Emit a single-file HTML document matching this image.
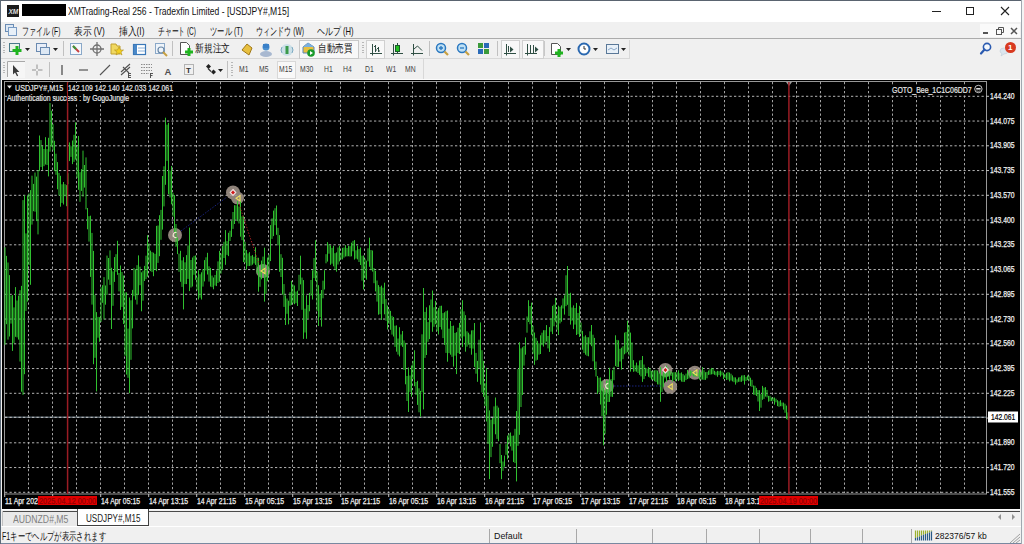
<!DOCTYPE html>
<html><head><meta charset="utf-8">
<style>
*{margin:0;padding:0;box-sizing:border-box}
html,body{width:1024px;height:544px;overflow:hidden;background:#f0f0f0;font-family:"Liberation Sans",sans-serif;color:#000}
.a{position:absolute}
#title{left:0;top:0;width:1024px;height:22px;background:#fff}
#menu{left:0;top:22px;width:1024px;height:16px;background:#f0f0f0}
.mi{position:absolute;top:24.5px;font-size:10.5px;line-height:13px;white-space:nowrap;color:#111}
.fit{transform-origin:0 0}
#tb{left:0;top:38px;width:1024px;height:41px;background:#f0f0f0}
.sep{position:absolute;width:1px;background:#c8c8c8}
.tf{position:absolute;top:64px;font-size:8.5px;line-height:10px;color:#444;white-space:nowrap;transform-origin:0 0;transform:scaleX(0.8)}
#chart{left:2px;top:80px;width:1018px;height:429px;background:#000}
.pl{position:absolute;left:990px;font-size:8.5px;line-height:11px;color:#f0f0f0;-webkit-text-stroke:0.25px #f0f0f0;white-space:nowrap;transform-origin:0 0;transform:scaleX(0.8)}
.tl{position:absolute;top:496px;font-size:8.5px;line-height:10px;color:#f0f0f0;-webkit-text-stroke:0.25px #f0f0f0;white-space:nowrap;transform-origin:0 0;transform:scaleX(0.81)}
.ct{position:absolute;font-size:8.5px;line-height:10px;color:#e8e8e8;-webkit-text-stroke:0.2px currentColor;white-space:nowrap;transform-origin:0 0;transform:scaleX(0.82)}
#status{left:0;top:527px;width:1024px;height:17px;background:#f0f0f0}
.ss{position:absolute;top:529px;width:1px;height:14px;background:#a8a8a8}
</style></head><body>
<!-- window border -->

<div class="a" id="title"></div>
<div class="a" style="left:0;top:0;width:1024px;height:1px;background:#5a6470"></div>
<div class="a" style="left:7px;top:5px;width:12px;height:12px;background:#1a1a1a"></div>
<div class="a" style="left:8.5px;top:7.5px;font-size:6.5px;line-height:7px;color:#e0e0e0;font-weight:bold;font-style:italic">XM</div>
<div class="a" style="left:22px;top:4px;width:44px;height:12px;background:#000"></div>
<div class="a fit" style="left:67.5px;top:4px;font-size:10.5px;line-height:14px;color:#111;white-space:nowrap;--w:221.5;transform:scaleX(0.814338)">XMTrading-Real 256 - Tradexfin Limited - [USDJPY#,M15]</div>
<!-- window controls -->
<div class="a" style="left:932px;top:11px;width:9px;height:1px;background:#222"></div>
<div class="a" style="left:966px;top:7px;width:8px;height:8px;border:1px solid #222"></div>
<svg class="a" style="left:1000px;top:6px" width="10" height="10"><path d="M1 1L9 9M9 1L1 9" stroke="#222" stroke-width="1.1"/></svg>

<!-- menu -->
<div class="a" id="menu"></div>
<svg class="a" style="left:5px;top:24px" width="12" height="12"><rect x="0.5" y="0.5" width="8" height="7" fill="#dde8f4" stroke="#6a8cb4"/><rect x="3.5" y="3.5" width="8" height="8" fill="#e8f0f8" stroke="#7a9cc4"/></svg>
<div class="mi fit" style="left:21.6px;--w:38.2;transform:scaleX(0.636667)">ファイル (F)</div>
<div class="mi fit" style="left:73.7px;--w:30.9;transform:scaleX(0.792308)">表示 (V)</div>
<div class="mi fit" style="left:118.9px;--w:25.5;transform:scaleX(0.796875)">挿入(I)</div>
<div class="mi fit" style="left:157.7px;--w:38.2;transform:scaleX(0.616129)">チャート (C)</div>
<div class="mi fit" style="left:209.8px;--w:32.6;transform:scaleX(0.665306)">ツール (T)</div>
<div class="mi fit" style="left:255.6px;--w:48.2;transform:scaleX(0.642667)">ウィンドウ (W)</div>
<div class="mi fit" style="left:317px;--w:37;transform:scaleX(0.72549)">ヘルプ (H)</div>
<div class="a" style="left:980px;top:24px;width:40px;height:13px;background:#fafafa"></div>
<div class="a" style="left:983px;top:32px;width:5px;height:2px;background:#555"></div>
<svg class="a" style="left:996px;top:27px" width="9" height="8"><rect x="0.5" y="2.5" width="5" height="5" fill="none" stroke="#555"/><path d="M2.5 2.5V0.5H7.5V5.5H5.5" fill="none" stroke="#555"/></svg>
<svg class="a" style="left:1010px;top:27px" width="8" height="8"><path d="M1 1L7 7M7 1L1 7" stroke="#555" stroke-width="1.5"/></svg>

<!-- toolbars -->
<div class="a" id="tb"></div>
<div class="a" style="left:2px;top:79px;width:1018px;height:1px;background:#fcfcfc"></div>
<div class="a" style="left:0;top:38px;width:1022px;height:1px;background:#ababab"></div>
<div class="a" style="left:0;top:58px;width:630px;height:1px;background:#d8d8d8"></div>
<!-- grippers -->
<div class="a" style="left:3px;top:42px;width:2px;height:13px;background:repeating-linear-gradient(#b8b8b8 0 1px,transparent 1px 2.5px)"></div>
<div class="a" style="left:3px;top:62px;width:2px;height:13px;background:repeating-linear-gradient(#b8b8b8 0 1px,transparent 1px 2.5px)"></div>
<div class="a" style="left:231px;top:62px;width:2px;height:14px;background:repeating-linear-gradient(#b8b8b8 0 1px,transparent 1px 2.5px)"></div>
<div class="a" style="left:362px;top:42px;width:2px;height:13px;background:repeating-linear-gradient(#b8b8b8 0 1px,transparent 1px 2.5px)"></div>

<!-- row1 icons -->
<svg class="a" style="left:0;top:38px" width="640" height="21">
 <!-- new chart -->
 <rect x="9.5" y="5.5" width="10" height="8" fill="#e8f2e8" stroke="#4a7a8a"/>
 <path d="M17 8v9M12.5 12.5h9" stroke="#1fb41f" stroke-width="3"/>
 <path d="M25 10h5l-2.5 3z" fill="#222"/>
 <rect x="36.5" y="5.5" width="10" height="8" fill="#e8eef8" stroke="#6a8ab0"/>
 <rect x="40.5" y="9.5" width="9" height="7" fill="#dde8f4" stroke="#6a8ab0"/>
 <path d="M53 10h5l-2.5 3z" fill="#222"/>
 <rect x="63" y="3" width="1" height="15" fill="#c0c0c0"/>
 <rect x="70.5" y="5.5" width="11" height="11" fill="#f4f8fc" stroke="#8aa8c8"/>
 <path d="M73 8l6 6" stroke="#c84040" stroke-width="2"/><path d="M73 8l3 3" stroke="#3a9a3a" stroke-width="2"/>
 <circle cx="97" cy="11" r="4" fill="none" stroke="#707070" stroke-width="1.3"/><path d="M97 4v14M90 11h14" stroke="#707070" stroke-width="1.3"/>
 <path d="M111 6h5l1 2h3v8h-9z" fill="#f0d860" stroke="#c0a030"/><path d="M119 9l1.5 3h3l-2.5 2 1 3-3-2-3 2 1-3-2.5-2h3z" fill="#f4d020" stroke="#b09020" stroke-width="0.6"/>
 <rect x="133.5" y="6.5" width="12" height="10" fill="#fff" stroke="#3a78b8" stroke-width="1.2"/><rect x="134" y="7" width="3" height="9" fill="#4a88c8"/><path d="M138 10h7M138 13h7" stroke="#8ab0d8"/>
 <rect x="155.5" y="5.5" width="9" height="10" fill="#eef4fa" stroke="#8aa8c8"/><circle cx="161" cy="12" r="3" fill="none" stroke="#6a88a8" stroke-width="1.2"/><path d="M163 14l4 4" stroke="#c8a040" stroke-width="2"/>
 <rect x="172" y="3" width="1" height="15" fill="#c0c0c0"/>
 <path d="M180.5 4.5h6l3 3v9h-9z" fill="#fff" stroke="#555"/>
 <path d="M189 10v8M185 14h8" stroke="#1fb41f" stroke-width="3"/>
 <path d="M242 12l5-6 5 4-3 7z" fill="#e8c040" stroke="#a07818"/>
 <circle cx="266" cy="9" r="3.5" fill="#4a90d0"/><ellipse cx="266" cy="16" rx="6" ry="3" fill="#a8b8d0"/><rect x="263" y="6" width="6" height="4" fill="#3a80c8"/>
 <circle cx="287" cy="12" r="6" fill="#cce0e8"/><path d="M287 8v8" stroke="#3a9a4a" stroke-width="3"/><path d="M282 9q-2 3 0 6M292 9q2 3 0 6" stroke="#7aa8c0" fill="none"/>
 <rect x="299.5" y="2.5" width="59" height="18" fill="#f8f8f8" stroke="#c8c8c8"/>
 <path d="M303 9l5-4 6 4v6h-11z" fill="#e8c040" stroke="#5a88b8"/><path d="M303 9l5-4 6 4" fill="#7ab0e0"/>
 <circle cx="311" cy="15" r="3.8" fill="#1a9a2a"/><path d="M310 13v4l3-2z" fill="#fff"/>
 <rect x="366.5" y="2.5" width="18" height="18" fill="#f8f8f8" stroke="#d0d0d0"/>
 <path d="M372.5 6v11.5M370 15.5h12M375.5 7v7M374 8.5h1.5M375.5 12h1.5M378.5 9v5M377 10.5h1.5M378.5 13h1.5" stroke="#2f4f44" stroke-width="1"/>
 <path d="M393.5 6v11.5M391 15.5h12M397.5 5v11" stroke="#2f4f44" stroke-width="1"/><rect x="395.5" y="7.5" width="4" height="6" fill="#22c022" stroke="#1a5a2a" stroke-width="1"/>
 <path d="M413.5 6v11.5M411 15.5h12M414 11l3.5-3 4.5 4.5" stroke="#2f4f44" stroke-width="1" fill="none"/>
 <rect x="429" y="3" width="1" height="15" fill="#c0c0c0"/>
 <circle cx="441" cy="10" r="4.5" fill="#bfe0f4" stroke="#2a78c0" stroke-width="1.5"/><path d="M439 10h4M441 8v4" stroke="#2a78c0" stroke-width="1.3"/><path d="M444.5 13.5l3.5 3.5" stroke="#c8a040" stroke-width="2.2"/>
 <circle cx="462" cy="10" r="4.5" fill="#bfe0f4" stroke="#2a78c0" stroke-width="1.5"/><path d="M460 10h4" stroke="#2a78c0" stroke-width="1.3"/><path d="M465.5 13.5l3.5 3.5" stroke="#c8a040" stroke-width="2.2"/>
 <rect x="478" y="5" width="5" height="5" fill="#3a9a3a"/><rect x="484" y="5" width="5" height="5" fill="#2a6ab8"/><rect x="478" y="11" width="5" height="5" fill="#2a6ab8"/><rect x="484" y="11" width="5" height="5" fill="#3a9a3a"/>
 <rect x="497" y="3" width="1" height="15" fill="#c0c0c0"/>
 <rect x="501.5" y="2.5" width="18" height="18" fill="#f8f8f8" stroke="#d0d0d0"/>
 <path d="M506.5 6v11.5M504 15.5h12M508.5 8v6" stroke="#2f4f44" stroke-width="1"/><path d="M510 8.5l3.5 3-3.5 3z" fill="#2f4f44"/>
 <rect x="522.5" y="2.5" width="21" height="18" fill="#f8f8f8" stroke="#d0d0d0"/>
 <path d="M527.5 6v11.5M525 15.5h12M530.5 7v8M533.5 7v8" stroke="#2f4f44" stroke-width="1"/><path d="M535 8.5l3.5 3-3.5 3z" fill="#2f4f44"/>
 <rect x="544" y="3" width="1" height="15" fill="#c8c8c8"/>
 <path d="M551.5 5.5h6l3 3v8h-9z" fill="#fff" stroke="#555"/><path d="M559 11v8M555 15h8" stroke="#1fb41f" stroke-width="3"/>
 <path d="M566 10h5l-2.5 3z" fill="#222"/>
 <circle cx="584" cy="11" r="5.5" fill="#fff" stroke="#2a68b0" stroke-width="2"/><path d="M584 8v3h2" stroke="#333" fill="none"/>
 <path d="M593 10h5l-2.5 3z" fill="#222"/>
 <rect x="606.5" y="6.5" width="12" height="9" fill="#e8f0f8" stroke="#5a7898"/><path d="M608 12l3-2 3 2 3-2" stroke="#8aa8c8" fill="none"/>
 <path d="M621 10h5l-2.5 3z" fill="#222"/>
 <rect x="629" y="2" width="1" height="18" fill="#d8d8d8"/>
</svg>
<svg class="a" style="left:970px;top:38px" width="54" height="21">
 <circle cx="17" cy="9" r="3.6" fill="#f4f8fc" stroke="#2a5ab0" stroke-width="1.6"/><path d="M14.5 11.5l-3.5 4" stroke="#2a5ab0" stroke-width="2.2" stroke-linecap="round"/>
 <path d="M30 13q0-3 4-3t4 3-4 3l-3 2 1-2.5q-2-.8-2-2.5z" fill="#dce6ee" stroke="#c0ccd8" stroke-width="0.6"/>
 <circle cx="40.5" cy="9.5" r="5.5" fill="#d83a20"/>
</svg>
<div class="a fit" style="left:195px;top:42px;font-size:10.5px;line-height:13px;color:#111;white-space:nowrap;--w:35;transform:scaleX(0.795455)">新規注文</div>
<div class="a fit" style="left:318px;top:42px;font-size:10.5px;line-height:13px;color:#111;white-space:nowrap;--w:34;transform:scaleX(0.772727)">自動売買</div>
<div class="a" style="left:1008px;top:43px;font-size:8px;line-height:10px;color:#fff;font-weight:bold">1</div>

<!-- row2 -->
<svg class="a" style="left:0;top:58px" width="640" height="21">
 <rect x="7" y="3" width="18" height="17" fill="#f6f6f6"/><path d="M7.5 19V3.5H25" stroke="#a8a8a8" stroke-width="1" fill="none"/>
 <path d="M13 7v9.5l2-2 2 3.8 1.2-.6-1.8-3.6h3z" fill="#3a3a3a"/>
 <path d="M37 6.5v4.5M37 13v4.5M32 12h4M38 12h4.5" stroke="#909090" stroke-width="1"/>
 <rect x="49" y="4" width="1" height="15" fill="#c0c0c0"/>
 <path d="M62 7v10" stroke="#444" stroke-width="1.2"/>
 <path d="M79 12h9" stroke="#555" stroke-width="1.2"/>
 <path d="M100 17l10-10" stroke="#555" stroke-width="1.1"/>
 <path d="M121 14l9-8M121 17l9-8M123 9l6 6" stroke="#505050" stroke-width="1.1"/><path d="M128.5 15.5h2.5M128.5 17.5h2.5M128.5 19.5h2.5M128.5 15v5" stroke="#444" stroke-width="0.9"/>
 <path d="M141 6.5h11M141 9.5h11M141 12.5h11M141 15.5h8" stroke="#8a8a8a" stroke-dasharray="1.5 1"/><path d="M150.5 15v5M150.5 15.5h2.5M150.5 17.5h2" stroke="#444" stroke-width="0.9"/>
 <text x="164.5" y="16.5" font-size="9.5" fill="#505050" font-family="Liberation Sans" font-weight="bold">A</text>
 <rect x="184.5" y="6.5" width="9" height="10" fill="none" stroke="#777" stroke-dasharray="1 1"/><text x="186" y="15" font-size="8" fill="#333" font-family="Liberation Sans" font-weight="bold">T</text>
 <path d="M206 8.5l2.5-2.5 2.5 2.5-2.5 2.5z" fill="#222"/><path d="M208 10.5l3 3" stroke="#333" stroke-width="1.2"/><path d="M211 14l2.5-2.5 2.5 2.5-2.5 2.5z" fill="#222"/>
 <path d="M218 11h5l-2.5 3z" fill="#222"/>
 <rect x="227" y="3" width="1" height="17" fill="#c0c0c0"/>
 <rect x="277.5" y="3.5" width="18" height="17" fill="#f8f8f8" stroke="#d8d8d8"/>
 <rect x="423" y="1" width="1" height="20" fill="#d8d8d8"/>
</svg>
<div class="tf" style="left:239px">M1</div>
<div class="tf" style="left:259px">M5</div>
<div class="tf" style="left:279px">M15</div>
<div class="tf" style="left:300px">M30</div>
<div class="tf" style="left:324px">H1</div>
<div class="tf" style="left:343px">H4</div>
<div class="tf" style="left:365px">D1</div>
<div class="tf" style="left:386px">W1</div>
<div class="tf" style="left:405px">MN</div>

<!-- chart -->
<div class="a" id="chart"></div>
<svg class="a" style="left:0;top:0" width="1024" height="544">
 <path d="M28.50 82V493M52.50 82V493M76.50 82V493M100.50 82V493M124.50 82V493M148.50 82V493M172.50 82V493M196.50 82V493M220.50 82V493M244.50 82V493M268.50 82V493M292.50 82V493M316.50 82V493M340.50 82V493M364.50 82V493M388.50 82V493M412.50 82V493M436.50 82V493M460.50 82V493M484.50 82V493M508.50 82V493M532.50 82V493M556.50 82V493M580.50 82V493M604.50 82V493M628.50 82V493M652.50 82V493M676.50 82V493M700.50 82V493M724.50 82V493M748.50 82V493M772.50 82V493M796.50 82V493M820.50 82V493M844.50 82V493M868.50 82V493M892.50 82V493M916.50 82V493M940.50 82V493M964.50 82V493" stroke="#a4a4a4" stroke-width="1" stroke-dasharray="2.25 2.25" fill="none"/>
 <path d="M5 96.30H986M5 121.05H986M5 145.80H986M5 170.55H986M5 195.30H986M5 220.05H986M5 244.80H986M5 269.55H986M5 294.30H986M5 319.05H986M5 343.80H986M5 368.55H986M5 393.30H986M5 442.80H986M5 467.55H986M5 492.30H986" stroke="#b4b4b4" stroke-width="1" stroke-dasharray="2.25 2.25" fill="none"/>
 <path d="M5 417.3H986" stroke="#556068" stroke-width="1.5" fill="none"/><path d="M5 417.3H986" stroke="#c8c8c8" stroke-width="1" stroke-dasharray="2.25 2.25" fill="none"/>
 <rect x="4.5" y="81.5" width="982" height="412.5" fill="none" stroke="#989898" stroke-width="1"/>
 <path d="M4.70 494V497M52.70 494V497M100.70 494V497M148.70 494V497M196.70 494V497M244.70 494V497M292.70 494V497M340.70 494V497M388.70 494V497M436.70 494V497M484.70 494V497M532.70 494V497M580.70 494V497M628.70 494V497M676.70 494V497M724.70 494V497M772.70 494V497M986 96.30H989M986 121.05H989M986 145.80H989M986 170.55H989M986 195.30H989M986 220.05H989M986 244.80H989M986 269.55H989M986 294.30H989M986 319.05H989M986 343.80H989M986 368.55H989M986 393.30H989M986 418.05H989M986 442.80H989M986 467.55H989M986 492.30H989" stroke="#c0c0c0" stroke-width="1"/>
 <path d="M786 82h6l-3 4z" fill="#a0a0a0"/>
 <!-- marker circles (under bars) -->
 <g fill="#a89a90" opacity="0.85">
 <circle cx="175" cy="235" r="7"/><circle cx="233" cy="192.5" r="7"/><circle cx="237.5" cy="198" r="6.5"/><circle cx="263" cy="271" r="7"/>
 <circle cx="606.8" cy="386" r="7"/><circle cx="665.4" cy="370" r="7"/><circle cx="670.2" cy="386.7" r="7"/><circle cx="694.9" cy="372.7" r="7"/>
 </g>
 <path d="M5.00 247.3V344.8M6.50 255.9V324.2M8.00 262.5V339.6M9.50 275.1V336.5M11.00 295.5V323.6M12.50 295.1V350.9M14.00 307.4V343.2M15.50 287.1V336.8M17.00 300.5V337.4M18.50 295.6V339.6M20.00 290.2V361.5M21.50 285.9V391.7M23.00 200.1V394.9M24.50 195.3V374.2M26.00 233.4V310.9M27.50 195.6V301.6M29.00 193.4V265.0M30.50 190.1V284.8M32.00 175.7V224.6M33.50 183.9V211.2M35.00 172.5V211.7M36.50 176.6V221.1M38.00 170.2V234.4M39.50 135.5V171.1M41.00 140.1V167.0M42.50 146.0V169.9M44.00 149.0V166.2M45.50 137.2V164.5M47.00 149.1V165.0M48.50 137.8V176.4M50.00 102.9V151.7M51.50 110.7V146.4M53.00 124.2V150.3M54.50 140.8V171.1M56.00 153.7V174.8M57.50 162.1V189.3M59.00 172.9V195.6M60.50 175.8V206.7M62.00 184.3V202.9M63.50 182.0V204.5M65.00 184.2V196.3M66.50 185.1V206.2M68.00 173.2V184.2M69.50 142.4V161.1M71.00 146.3V156.9M72.50 140.5V164.1M74.00 134.8V161.9M75.50 122.3V159.6M77.00 146.8V177.9M78.50 136.0V189.8M80.00 172.2V201.8M81.50 169.1V190.9M83.00 150.6V196.7M84.50 165.0V187.6M86.00 157.4V209.4M87.50 208.0V229.3M89.00 216.2V241.6M90.50 215.7V276.9M92.00 232.9V304.6M93.50 250.9V364.2M95.00 294.8V357.8M96.50 312.1V391.4M98.00 316.8V337.7M99.50 317.2V341.8M101.00 287.3V321.9M102.50 285.2V302.8M104.00 277.1V319.6M105.50 285.5V304.7M107.00 255.6V294.9M108.50 258.0V279.6M110.00 250.4V284.9M111.50 267.8V329.0M113.00 271.4V305.8M114.50 257.1V281.9M116.00 254.2V271.8M117.50 240.8V274.8M119.00 273.0V291.4M120.50 265.5V309.9M122.00 272.0V306.9M123.50 275.5V324.0M125.00 292.3V355.7M126.50 292.3V374.6M128.00 328.6V377.8M129.50 297.5V393.2M131.00 300.3V359.8M132.50 289.9V328.4M134.00 267.9V296.2M135.50 269.6V299.7M137.00 265.2V304.5M138.50 255.4V295.0M140.00 266.7V285.2M141.50 272.3V311.3M143.00 270.7V300.7M144.50 265.9V281.0M146.00 255.7V279.2M147.50 235.2V276.8M149.00 243.3V262.6M150.50 250.6V271.1M152.00 252.1V272.1M153.50 252.7V276.2M155.00 253.8V269.8M156.50 225.9V271.2M158.00 225.5V262.9M159.50 215.2V256.2M161.00 209.9V239.8M162.50 176.0V229.6M164.00 166.3V206.4M165.50 117.7V184.8M167.00 124.7V160.9M168.50 122.9V194.2M170.00 170.8V197.4M171.50 166.0V204.3M173.00 192.8V216.6M174.50 195.1V232.0M176.00 224.0V246.8M177.50 237.5V254.1M179.00 253.6V271.8M180.50 250.8V281.8M182.00 260.4V286.9M183.50 257.2V309.4M185.00 262.3V284.1M186.50 255.1V284.1M188.00 245.5V278.9M189.50 227.6V291.1M191.00 260.0V287.5M192.50 257.5V286.5M194.00 255.8V274.8M195.50 255.4V279.8M197.00 277.4V290.2M198.50 270.2V299.5M200.00 274.3V297.6M201.50 272.3V299.5M203.00 269.1V286.6M204.50 260.1V281.4M206.00 257.3V270.4M207.50 252.8V274.5M209.00 266.3V281.6M210.50 267.9V286.6M212.00 275.6V287.2M213.50 277.5V289.3M215.00 275.0V285.6M216.50 270.5V286.1M218.00 261.4V283.0M219.50 250.9V281.7M221.00 253.6V273.6M222.50 245.8V269.9M224.00 241.8V258.0M225.50 230.1V264.8M227.00 241.1V254.9M228.50 232.8V256.1M230.00 230.7V241.0M231.50 220.7V236.9M233.00 212.0V228.9M234.50 205.2V224.0M236.00 205.3V219.2M237.50 201.0V221.2M239.00 206.5V223.5M240.50 200.5V236.7M242.00 216.3V240.2M243.50 215.7V262.0M245.00 241.8V262.9M246.50 250.0V269.7M248.00 253.4V266.1M249.50 252.1V266.0M251.00 255.8V265.6M252.50 255.1V264.7M254.00 256.8V263.4M255.50 247.3V264.9M257.00 257.6V273.3M258.50 257.8V291.7M260.00 271.1V286.8M261.50 260.6V279.3M263.00 256.6V272.3M264.50 247.7V301.6M266.00 272.0V293.9M267.50 257.6V281.2M269.00 254.5V269.7M270.50 225.1V261.1M272.00 218.3V238.9M273.50 210.6V236.1M275.00 208.2V225.2M276.50 205.5V234.8M278.00 227.8V245.3M279.50 235.1V271.8M281.00 254.2V277.0M282.50 257.8V294.7M284.00 284.1V306.9M285.50 295.3V325.0M287.00 298.5V313.8M288.50 300.7V324.4M290.00 292.1V305.7M291.50 280.9V304.9M293.00 284.6V303.3M294.50 285.5V304.2M296.00 291.6V303.2M297.50 290.7V306.0M299.00 274.8V290.7M300.50 255.7V284.4M302.00 277.6V309.8M303.50 280.1V338.9M305.00 308.7V332.5M306.50 295.3V338.8M308.00 305.0V318.7M309.50 292.9V311.3M311.00 280.0V295.7M312.50 270.3V299.5M314.00 258.0V278.1M315.50 240.3V281.0M317.00 271.5V310.8M318.50 285.2V326.0M320.00 293.8V317.2M321.50 290.0V326.6M323.00 280.7V298.3M324.50 270.2V289.5M326.00 254.2V263.3M327.50 242.1V261.6M329.00 244.2V253.7M330.50 245.3V264.8M332.00 247.9V263.7M333.50 245.8V266.3M335.00 253.2V269.9M336.50 252.4V271.7M338.00 247.5V264.5M339.50 245.7V261.4M341.00 252.7V259.4M342.50 247.9V259.4M344.00 247.5V257.6M345.50 245.1V256.5M347.00 248.0V256.4M348.50 245.8V256.2M350.00 246.2V256.6M351.50 242.7V256.3M353.00 240.9V251.3M354.50 240.1V259.6M356.00 250.3V258.6M357.50 245.6V259.4M359.00 249.1V262.0M360.50 247.5V265.0M362.00 255.7V280.6M363.50 255.5V289.5M365.00 258.7V278.2M366.50 260.7V279.7M368.00 248.3V261.3M369.50 237.7V266.8M371.00 250.0V270.2M372.50 250.5V271.6M374.00 268.0V283.2M375.50 270.8V291.4M377.00 280.5V301.6M378.50 285.1V314.7M380.00 286.8V314.2M381.50 285.6V320.0M383.00 287.7V303.9M384.50 282.7V314.3M386.00 299.0V320.8M387.50 305.5V329.5M389.00 309.1V323.9M390.50 310.9V329.8M392.00 315.8V334.6M393.50 317.0V336.5M395.00 325.7V346.9M396.50 325.4V351.7M398.00 338.5V354.6M399.50 327.2V356.4M401.00 334.4V345.5M402.50 331.0V346.9M404.00 340.4V370.0M405.50 342.9V384.3M407.00 376.0V401.0M408.50 367.5V412.0M410.00 375.5V391.9M411.50 365.5V396.7M413.00 360.8V379.2M414.50 350.3V386.2M416.00 382.0V395.0M417.50 380.8V404.9M419.00 388.3V412.3M420.50 390.9V416.7M422.00 334.3V392.2M423.50 288.0V409.4M425.00 311.9V357.9M426.50 307.3V355.0M428.00 322.1V341.8M429.50 305.3V339.1M431.00 299.5V322.3M432.50 290.5V331.8M434.00 307.3V326.8M435.50 300.9V324.2M437.00 310.5V331.1M438.50 307.9V334.5M440.00 305.9V327.0M441.50 305.7V329.5M443.00 313.1V338.1M444.50 312.3V345.0M446.00 311.2V352.9M447.50 310.5V361.7M449.00 328.7V353.1M450.50 321.0V354.7M452.00 326.0V356.8M453.50 325.6V366.6M455.00 332.9V355.7M456.50 332.2V374.1M458.00 327.7V353.1M459.50 322.9V354.0M461.00 309.3V337.8M462.50 300.2V346.9M464.00 311.4V336.4M465.50 315.2V351.7M467.00 331.3V346.7M468.50 332.7V344.6M470.00 334.4V348.2M471.50 330.4V354.7M473.00 330.2V348.6M474.50 323.0V366.9M476.00 352.9V373.7M477.50 360.9V381.8M479.00 339.7V368.6M480.50 322.4V384.6M482.00 350.2V392.5M483.50 360.9V397.0M485.00 383.2V406.1M486.50 367.9V421.5M488.00 395.7V444.0M489.50 410.4V479.1M491.00 419.8V457.1M492.50 418.0V446.8M494.00 406.4V424.2M495.50 397.5V434.3M497.00 405.7V438.9M498.50 407.6V441.2M500.00 444.0V463.2M501.50 455.0V479.2M503.00 461.5V470.8M504.50 455.6V466.7M506.00 444.2V454.8M507.50 435.6V459.3M509.00 433.6V442.9M510.50 432.5V446.4M512.00 435.8V450.6M513.50 435.6V462.0M515.00 428.8V463.1M516.50 411.0V481.4M518.00 369.1V445.8M519.50 342.2V434.8M521.00 348.4V407.0M522.50 347.3V395.0M524.00 346.0V365.6M525.50 337.4V354.7M527.00 316.5V332.7M528.50 300.2V322.0M530.00 306.0V324.2M531.50 302.7V334.8M533.00 325.7V353.7M534.50 332.5V364.8M536.00 337.8V360.6M537.50 340.8V359.8M539.00 343.3V354.6M540.50 335.3V354.0M542.00 332.7V345.2M543.50 330.2V346.6M545.00 330.2V343.5M546.50 325.1V341.6M548.00 336.0V348.4M549.50 327.1V351.9M551.00 318.1V331.7M552.50 305.9V334.1M554.00 304.6V326.3M555.50 297.9V321.7M557.00 314.5V329.8M558.50 305.7V335.0M560.00 306.8V323.4M561.50 305.4V321.7M563.00 298.4V308.5M564.50 295.3V314.6M566.00 275.3V306.2M567.50 266.0V304.8M569.00 293.8V316.0M570.50 292.8V324.6M572.00 307.5V320.7M573.50 305.4V329.1M575.00 308.0V324.6M576.50 302.9V335.0M578.00 313.0V334.2M579.50 305.8V337.0M581.00 322.5V333.7M582.50 330.9V349.7M584.00 336.5V353.0M585.50 335.3V354.7M587.00 337.2V355.8M588.50 337.3V356.3M590.00 331.3V344.3M591.50 325.0V346.2M593.00 334.7V361.3M594.50 337.9V370.0M596.00 361.5V376.5M597.50 376.0V394.0M599.00 377.7V392.3M600.50 377.4V404.5M602.00 380.9V416.0M603.50 387.8V445.3M605.00 390.1V434.1M606.50 380.6V414.7M608.00 380.6V402.0M609.50 367.8V401.9M611.00 379.0V396.7M612.50 370.2V396.9M614.00 366.8V380.2M615.50 335.3V366.0M617.00 339.9V367.0M618.50 340.3V366.9M620.00 348.8V361.5M621.50 347.7V369.6M623.00 346.2V359.2M624.50 332.6V354.3M626.00 331.9V353.3M627.50 320.7V351.9M629.00 325.3V355.5M630.50 332.6V371.6M632.00 342.4V367.6M633.50 360.2V371.8M635.00 365.4V371.4M636.50 362.6V371.7M638.00 365.4V373.0M639.50 360.5V374.8M641.00 360.1V376.4M642.50 356.0V381.9M644.00 364.5V379.1M645.50 367.8V376.1M647.00 368.6V373.3M648.50 367.1V376.8M650.00 368.4V377.7M651.50 370.9V379.6M653.00 370.6V380.0M654.50 370.3V381.2M656.00 370.1V382.1M657.50 370.6V384.4M659.00 372.5V384.6M660.50 367.1V401.8M662.00 374.6V391.9M663.50 367.7V386.8M665.00 369.7V378.4M666.50 365.7V381.8M668.00 367.8V376.7M669.50 370.8V379.5M671.00 371.2V376.0M672.50 372.4V381.4M674.00 372.2V379.9M675.50 372.2V381.3M677.00 372.4V379.4M678.50 370.3V381.0M680.00 373.2V380.1M681.50 372.4V381.6M683.00 374.1V382.0M684.50 375.4V381.8M686.00 373.6V380.1M687.50 370.0V379.1M689.00 372.5V378.5M690.50 370.4V376.1M692.00 371.0V375.3M693.50 372.0V376.4M695.00 373.0V376.9M696.50 372.1V376.4M698.00 372.6V376.8M699.50 370.1V379.7M701.00 371.9V379.8M702.50 367.1V379.5M704.00 370.3V379.9M705.50 372.2V379.9M707.00 371.9V378.3M708.50 370.5V374.9M710.00 369.2V374.7M711.50 367.9V374.4M713.00 368.2V374.2M714.50 370.8V374.8M716.00 371.7V375.4M717.50 370.8V376.8M719.00 371.2V375.1M720.50 370.5V376.6M722.00 371.6V375.3M723.50 372.7V379.1M725.00 374.4V378.1M726.50 372.8V380.0M728.00 372.1V379.7M729.50 372.6V381.4M731.00 373.7V380.5M732.50 375.4V381.4M734.00 377.3V382.2M735.50 377.4V384.6M737.00 379.3V382.6M738.50 377.5V381.8M740.00 377.1V381.8M741.50 375.5V381.8M743.00 375.3V380.8M744.50 375.1V384.6M746.00 376.9V381.0M747.50 375.5V380.0M749.00 375.8V380.9M750.50 377.7V386.2M752.00 379.8V386.9M753.50 385.5V394.6M755.00 385.8V395.0M756.50 387.9V396.0M758.00 390.1V401.5M759.50 390.2V411.0M761.00 394.1V407.7M762.50 385.9V399.8M764.00 387.6V398.9M765.50 387.1V396.6M767.00 389.9V397.4M768.50 395.9V401.7M770.00 395.8V401.2M771.50 397.5V401.1M773.00 397.7V401.0M774.50 397.5V404.7M776.00 398.7V402.3M777.50 400.2V406.1M779.00 401.3V406.8M780.50 400.2V406.2M782.00 402.6V406.3M783.50 402.6V409.6M785.00 403.7V412.8M786.50 405.6V419.1M788.00 412.4V419.9" stroke="#2fc02f" stroke-width="1" fill="none"/>
 <path d="M67.6 82V494" stroke="#9a1c24" stroke-width="1.5"/>
 <path d="M788.9 82V494" stroke="#9a1c24" stroke-width="1.5"/>
 <!-- trade lines -->
 <path d="M181 231L227 197" stroke="#1a2480" stroke-width="1" stroke-dasharray="1.5 1.5"/>
 <path d="M239 204L259 264" stroke="#a02020" stroke-width="1" stroke-dasharray="1.5 1.5"/>
 <path d="M614 386H662" stroke="#1a2480" stroke-width="1" stroke-dasharray="1.5 1.5"/>
 <!-- glyphs -->
 <g fill="none" stroke-width="1.1">
 <path d="M176.5 232.5a2.6 2.6 0 1 0 0 5" stroke="#f0f0d0"/>
 <path d="M233 189.5l2.8 3-2.8 3-2.8-3z" fill="#d01818" stroke="#f0e0e0"/>
 <path d="M240 195.5v5.5l-4-2.75z" stroke="#f0e060"/>
 <path d="M265 268.2v5.6l-4-2.8z" stroke="#f0e060"/>
 <path d="M608.3 383.4a2.6 2.6 0 1 0 0 5.2" stroke="#f0f0d0"/>
 <path d="M665.4 367l2.8 3-2.8 3-2.8-3z" fill="#d01818" stroke="#f0e0e0"/>
 <path d="M672.2 383.9v5.6l-4-2.8z" stroke="#f0e060"/>
 <path d="M696.9 369.9v5.6l-4-2.8z" stroke="#f0e060"/>
 </g>
 <!-- price box -->
 <rect x="988" y="411.5" width="30" height="11" fill="#fff"/>
 <rect x="38" y="497" width="59" height="8" fill="#e00000"/>
 <rect x="759" y="497" width="59" height="8" fill="#e00000"/>
 <path d="M7 85.5h5l-2.5 3z" fill="#e8e8e8"/>
 <circle cx="978.4" cy="89" r="3.7" fill="none" stroke="#d8d8d8" stroke-width="0.9"/><path d="M976.2 88.8h4.4" stroke="#e0e0e0" stroke-width="1.6"/><path d="M976.4 90.8q2 1.2 4 0" stroke="#c0c0c0" stroke-width="0.7" fill="none"/>
</svg>
<div class="pl" style="top:90.8px">144.240</div><div class="pl" style="top:115.5px">144.075</div><div class="pl" style="top:140.3px">143.905</div><div class="pl" style="top:165.1px">143.735</div><div class="pl" style="top:189.8px">143.570</div><div class="pl" style="top:214.6px">143.400</div><div class="pl" style="top:239.3px">143.235</div><div class="pl" style="top:264.1px">143.065</div><div class="pl" style="top:288.8px">142.895</div><div class="pl" style="top:313.6px">142.730</div><div class="pl" style="top:338.3px">142.560</div><div class="pl" style="top:363.1px">142.395</div><div class="pl" style="top:387.8px">142.225</div><div class="pl" style="top:437.3px">141.890</div><div class="pl" style="top:462.1px">141.720</div><div class="pl" style="top:486.8px">141.555</div>
<div class="tl" style="left:4.7px">11 Apr 2025</div><div class="tl" style="left:100.5px">14 Apr 05:15</div><div class="tl" style="left:148.5px">14 Apr 13:15</div><div class="tl" style="left:196.5px">14 Apr 21:15</div><div class="tl" style="left:244.5px">15 Apr 05:15</div><div class="tl" style="left:292.5px">15 Apr 13:15</div><div class="tl" style="left:340.5px">15 Apr 21:15</div><div class="tl" style="left:388.5px">16 Apr 05:15</div><div class="tl" style="left:436.5px">16 Apr 13:15</div><div class="tl" style="left:484.5px">16 Apr 21:15</div><div class="tl" style="left:532.5px">17 Apr 05:15</div><div class="tl" style="left:580.5px">17 Apr 13:15</div><div class="tl" style="left:628.5px">17 Apr 21:15</div><div class="tl" style="left:676.5px">18 Apr 05:15</div><div class="tl" style="left:724.5px">18 Apr 13:15</div>
<div class="a" style="left:38px;top:496px;width:59px;height:9px;background:#e00000"></div>
<div class="ct fit" style="left:39px;top:496px;color:#900000;--w:57;transform:scaleX(0.863636)">2025.04.12 00:00</div>
<div class="a" style="left:759px;top:496px;width:59px;height:9px;background:#e00000"></div>
<div class="ct fit" style="left:760px;top:496px;color:#900000;--w:57;transform:scaleX(0.863636)">2025.04.19 00:00</div>
<div class="ct fit" style="left:990.5px;top:412px;color:#000;--w:24.5;transform:scaleX(0.790323)">142.061</div>
<div class="ct fit" style="background:#000;left:15px;top:83px;--w:48;transform:scaleX(0.842105)">USDJPY#,M15</div>
<div class="ct fit" style="background:#000;left:68px;top:83px;--w:105;transform:scaleX(0.807692)">142.109 142.140 142.033 142.061</div>
<div class="ct fit" style="background:#000;left:7px;top:93px;--w:122;transform:scaleX(0.807947)">Authentication success : by GogoJungle</div>
<div class="ct fit" style="background:#000;left:891.6px;top:84.5px;--w:80;transform:scaleX(0.816327)">GOTO_Bee_1C1C06DD7</div>
<div class="a" style="left:67.3px;top:82px;width:1px;height:22px;background:#a01c1c"></div>

<!-- tabs -->
<div class="a" style="left:2px;top:509px;width:1018px;height:1px;background:#fafafa"></div>
<div class="a" style="left:2px;top:511px;width:1018px;height:1px;background:#4a4a4a"></div>
<div class="a" style="left:2px;top:512px;width:75px;height:14px;background:#e9e9e9"></div>
<div class="a" style="left:2px;top:511px;width:1px;height:15px;background:#c0c0c0"></div>
<div class="a fit" style="left:13.3px;top:512.5px;font-size:10px;line-height:13px;color:#808080;white-space:nowrap;--w:55.5;transform:scaleX(0.867188)">AUDNZD#,M5</div>
<div class="a" style="left:77px;top:509px;width:72px;height:17px;background:#fff;border-left:1px solid #505050;border-right:1.5px solid #404040;border-bottom:1.5px solid #404040"></div>
<div class="a fit" style="left:85.9px;top:511.5px;font-size:10px;line-height:13px;color:#1a1a1a;white-space:nowrap;--w:54.3;transform:scaleX(0.810448)">USDJPY#,M15</div>
<svg class="a" style="left:995px;top:513px" width="24" height="9"><path d="M6 1v6l-3-3z" fill="#909090"/><path d="M17 1v6l3-3z" fill="#909090"/></svg>

<!-- status -->
<div class="a" id="status"></div>
<div class="a" style="left:0;top:526px;width:1022px;height:1px;background:#fff"></div>
<div class="a fit" style="left:2.3px;top:529.5px;font-size:10.5px;line-height:13px;color:#111;white-space:nowrap;--w:103.7;transform:scaleX(0.669032)">F1キーでヘルプが表示されます</div>
<div class="ss" style="left:489px"></div>
<div class="a fit" style="left:494px;top:530px;font-size:9.5px;line-height:12px;color:#111;white-space:nowrap;--w:28;transform:scaleX(0.933333)">Default</div>
<div class="ss" style="left:576px"></div>
<div class="ss" style="left:652px"></div>
<div class="ss" style="left:706px"></div>
<div class="ss" style="left:759px"></div>
<div class="ss" style="left:810px"></div>
<div class="ss" style="left:862px"></div>
<div class="ss" style="left:911px"></div>
<svg class="a" style="left:914px;top:530px" width="20" height="11"><path d="M1.5 0.5V8.0M3.5 0.5V7.2M5.5 0.5V6.4M7.5 0.5V5.6M9.5 0.5V4.8M11.5 0.5V4.0M13.5 0.5V3.2M15.5 0.5V2.4M17.5 0.5V1.6" stroke="#9ab030" stroke-width="1.2"/><path d="M1.5 8.0V10.5M3.5 7.2V10.5M5.5 6.4V10.5M7.5 5.6V10.5M9.5 4.8V10.5M11.5 4.0V10.5M13.5 3.2V10.5M15.5 2.4V10.5M17.5 1.6V10.5" stroke="#2a5a88" stroke-width="1.2"/></svg><svg class="a" style="left:1008px;top:532px" width="13" height="11"><path d="M12 2L2 11M12 5L5 11M12 8L8 11" stroke="#a0a0a0" stroke-width="1"/></svg>
<div class="a fit" style="left:935px;top:530px;font-size:9.5px;line-height:12px;color:#111;white-space:nowrap;--w:52;transform:scaleX(0.896552)">282376/57 kb</div>
<div class="a" style="left:0;top:543px;width:1024px;height:1px;background:#7888a0"></div>
<div class="a" style="left:0;top:0;width:1px;height:544px;background:#5c6a78"></div>
<div class="a" style="left:1021px;top:0;width:1px;height:544px;background:#a0a8b0"></div>
<div class="a" style="left:1022px;top:0;width:2px;height:544px;background:#f4f4f4"></div>
<script>
document.querySelectorAll('.fit').forEach(function(e){var w=parseFloat(e.style.getPropertyValue('--w'));var n=e.scrollWidth;if(n>0&&w>0){e.style.transform='scaleX('+(w/n)+')';}});
</script>
</body></html>
